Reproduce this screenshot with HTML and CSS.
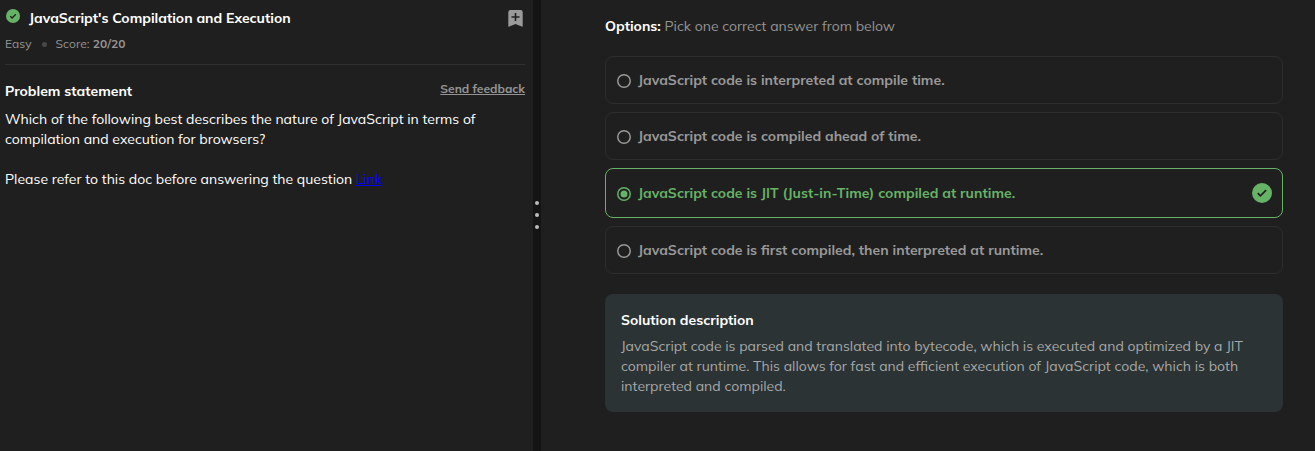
FILE: index.html
```html
<!DOCTYPE html>
<html lang="en">
<head>
<meta charset="utf-8">
<title>JavaScript's Compilation and Execution</title>
<link rel="stylesheet" href="styles.css">
</head>
<body>
<main class="split">
  <section class="problem">
    <header class="heading">
      <svg class="solved" viewBox="0 0 20 20"><circle cx="10" cy="10" r="10" fill="#66b266"/><path d="M6 10.200l2.700 2.700L14 7.600" fill="none" stroke="#1f1f1f" stroke-width="1.8"/></svg>
      <h1 class="title">JavaScript's Compilation and Execution</h1>
      <svg class="bookmark" viewBox="0 0 15 17"><path d="M2.500 0h10A2.200 2.200 0 0 1 14.700 2.200V15.800Q14.700 17 13.600 16.500L7.500 13.900 1.400 16.500Q.300 17 .300 15.800V2.200A2.200 2.200 0 0 1 2.500 0z" fill="#9a9a9a"/><path d="M7.500 3v8M3.500 7h8" stroke="#1f1f1f" stroke-width="1.600"/></svg>
    </header>
    <div class="meta"><span class="level">Easy</span><i class="dot"></i><span class="score">Score: <b>20/20</b></span></div>
    <div class="subhead"><h2 class="label">Problem statement</h2><a class="feedback">Send feedback</a></div>
    <div class="statement">
      <p>Which of the following best describes the nature of JavaScript in terms of<br>compilation and execution for browsers?</p>
      <p>Please refer to this doc before answering the question <a class="link">Link</a></p>
    </div>
  </section>
  <div class="handle"><i></i><i></i><i></i></div>
  <section class="answers">
    <p class="prompt"><b>Options:</b> <span>Pick one correct answer from below</span></p>
    <div class="options">
      <label class="option"><svg class="radio" viewBox="0 0 14 14"><circle class="ring" cx="7" cy="7" r="6.250"/></svg><span>JavaScript code is interpreted at compile time.</span></label>
      <label class="option"><svg class="radio" viewBox="0 0 14 14"><circle class="ring" cx="7" cy="7" r="6.250"/></svg><span>JavaScript code is compiled ahead of time.</span></label>
      <label class="option chosen"><svg class="radio" viewBox="0 0 14 14"><circle class="ring" cx="7" cy="7" r="6.250"/><circle class="core" cx="7" cy="7" r="3.500"/></svg><span>JavaScript code is JIT (Just-in-Time) compiled at runtime.</span><svg class="tick" viewBox="0 0 20 20"><circle cx="10" cy="10" r="10" fill="#66b266"/><path d="M5.700 10.200l2.700 2.700 5.700-5.700" fill="none" stroke="#1f1f1f" stroke-width="1.700"/></svg></label>
      <label class="option"><svg class="radio" viewBox="0 0 14 14"><circle class="ring" cx="7" cy="7" r="6.250"/></svg><span>JavaScript code is first compiled, then interpreted at runtime.</span></label>
    </div>
    <article class="solution">
      <h2 class="label">Solution description</h2>
      <p>JavaScript code is parsed and translated into bytecode, which is executed and optimized by a JIT<br>compiler at runtime. This allows for fast and efficient execution of JavaScript code, which is both<br>interpreted and compiled.</p>
    </article>
  </section>
</main>
</body>
</html>
```
FILE: styles.css
```css
* { box-sizing: border-box; margin: 0; padding: 0; }
body { background: #1f1f1f; color: #fff; font: 14px/20px Mulish, Muli, Lato, sans-serif; font-feature-settings: "liga" 1; }
p, span, h1, h2, a { white-space: nowrap; }
.split { display: flex; height: 451px; overflow: hidden; }
.problem { width: 533px; padding: 8px 8px 0 5px; }
.heading { display: flex; align-items: flex-start; height: 28px; }
.solved { width: 14px; height: 14px; margin: 1px 9px 0 1px; }
.title { flex: 1; font-size: 14px; font-weight: 700; line-height: 20px; }
.bookmark { width: 15px; height: 17px; margin: 2px 2.5px 0 0; }
.meta { display: flex; align-items: center; height: 29px; padding-bottom: 12px; border-bottom: 1px solid #303030; color: #949494; font-size: 12px; letter-spacing: 0.05px; }
.dot { width: 5px; height: 5px; margin: 0 9px 0 10px; border-radius: 50%; background: #484848; }
.subhead { display: flex; justify-content: space-between; padding-top: 16px; height: 44px; }
.label { font-size: 14px; line-height: 20px; font-weight: 700; }
.feedback { color: #949494; font-size: 12px; line-height: 16px; font-weight: 700; text-decoration: underline; }
.statement { display: grid; gap: 20px; color: #fff; letter-spacing: 0.005px; }
.link { color: #0000ff; text-decoration: underline; }
.handle { width: 8px; background: #141414; display: flex; flex-direction: column; align-items: center; gap: 8px; padding-top: 201px; }
.handle i { width: 4px; height: 4px; border-radius: 50%; background: #bcbcbc; }
.answers { flex: 1; padding: 16px 32px 0 64px; }
.prompt { height: 40px; color: #949494; }
.prompt b { color: #fff; }
.options { display: grid; gap: 8px; }
.option { display: flex; align-items: center; height: 48px; padding: 0 10px 0 11px; border: 1px solid #2d2d2d; border-radius: 8px; color: #999; font-weight: 700; letter-spacing: 0.01px; }
.radio { width: 14px; height: 14px; margin: 1px 7px 0 0; }
.ring { fill: none; stroke: currentColor; stroke-width: 1.500; }
.core { fill: currentColor; }
.chosen { height: 50px; color: #66b266; border-color: #66b266; }
.tick { width: 20px; height: 20px; margin: -1px 0 0 auto; }
.solution { margin-top: 20px; height: 118px; padding: 16px; background: #2b3334; border-radius: 8px; color: #a8a8a8; letter-spacing: 0.01px; }
.solution .label { color: #fff; margin-bottom: 6px; letter-spacing: 0; }
```
